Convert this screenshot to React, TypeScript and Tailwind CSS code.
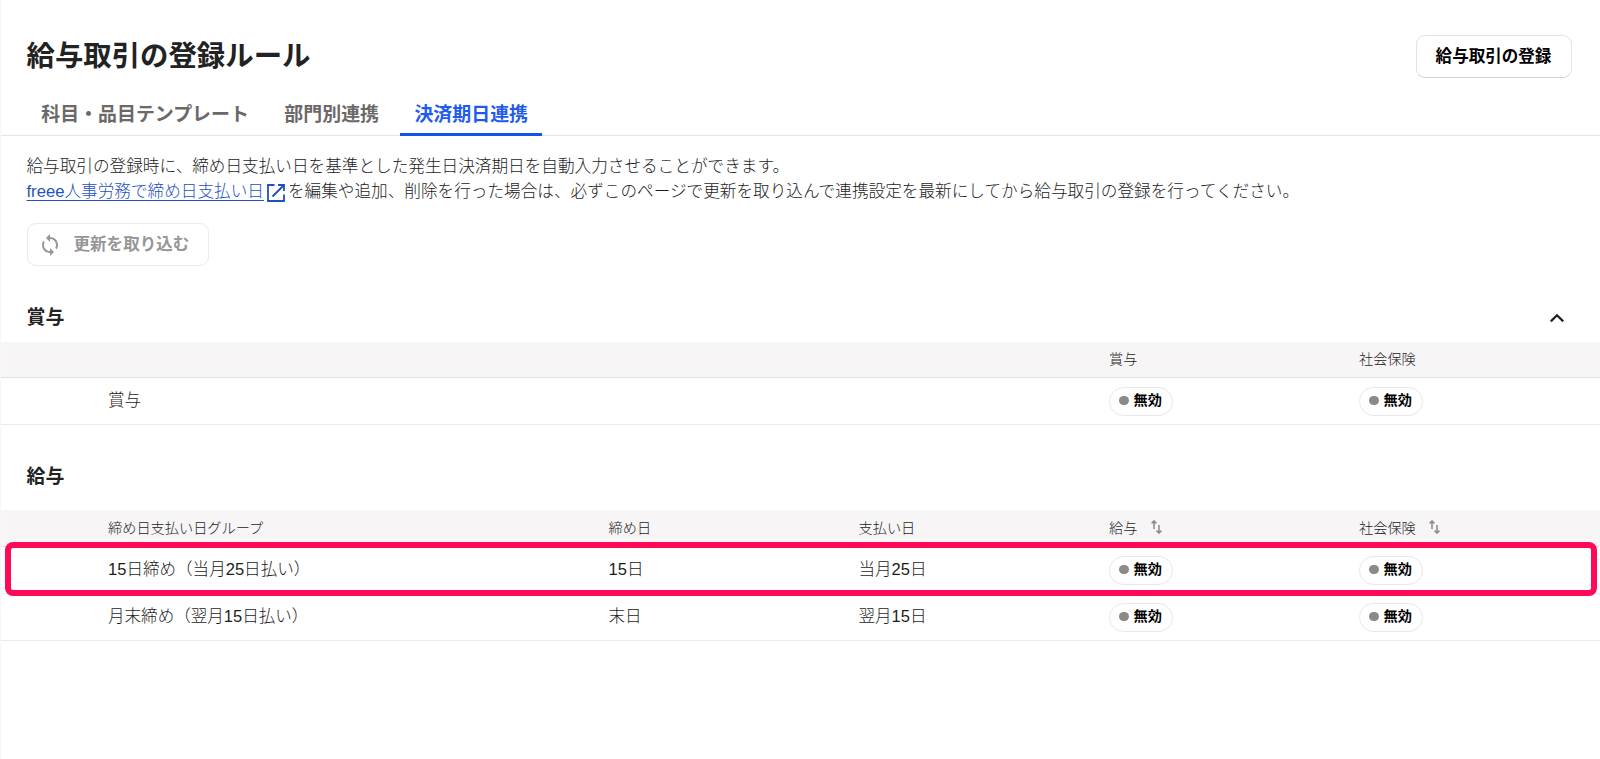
import React from 'react';

type SalaryRow = {
  group: string;
  closing: string;
  payment: string;
};

const tabs = ['科目・品目テンプレート', '部門別連携', '決済期日連携'];

const salaryRows: SalaryRow[] = [
  { group: '15日締め（当月25日払い）', closing: '15日', payment: '当月25日' },
  { group: '月末締め（翌月15日払い）', closing: '末日', payment: '翌月15日' },
];

// Both tables share the same columns
const rowGrid = 'grid grid-cols-[108px_500.5px_250px_250.5px_250px_1fr] items-center border-b';
const headRow = `${rowGrid} bg-[#f7f5f6] border-[#e1e0e1] pb-px text-[14.2px] leading-5 font-light text-[#1c1c1c]`;
const bodyRow = `${rowGrid} border-[#ebeaeb] pb-px text-[16.56px] leading-6 font-light text-[#1c1c1c]`;

const StatusBadge = () => (
  <span className="mt-0.5 flex h-[29px] w-16 items-center gap-[5px] rounded-full border border-[#e9e7e7] bg-white pl-[9px] pb-[2px] text-[14.2px] leading-5 font-bold text-black">
    <span className="h-[9.5px] w-[9.5px] rounded-full bg-[#8c8989]" />
    <span className="-mt-px">無効</span>
  </span>
);

const SortIcon = () => (
  <svg className="mb-[2px] h-[14px] w-[11px]" viewBox="0 0 11 14" fill="none" stroke="#8c8989" strokeWidth="1.5">
    <path d="M3 9V1M0.6 3.4L3 1L5.4 3.4" />
    <path d="M8 5V13M5.6 10.6L8 13L10.4 10.6" />
  </svg>
);

const App = () => {
  return (
    <div className="relative h-[759px] w-full overflow-hidden border-l border-[#f7f7f7] bg-white font-['Liberation_Sans','Noto_Sans_CJK_JP',sans-serif] text-[#323232]">
      <div className="-ml-px">
        <header className="flex h-[98px] items-start justify-between pr-[28.5px] pl-[26.5px]">
          <h1 className="pt-[36px] text-[28.4px] leading-10 font-bold text-[#222]">給与取引の登録ルール</h1>
          <button className="mt-[35px] h-[43px] w-[156px] rounded-[9px] border border-[#e3e1e1] border-b-[#d2d0d0] bg-white text-[16.56px] leading-6 font-bold text-black">
            給与取引の登録
          </button>
        </header>

        <nav className="flex h-[38px] gap-[7px] border-b border-[#e5e4e4] pl-[27px]">
          {tabs.map((tab) => (
            <button
              key={tab}
              className={
                tab === '決済期日連携'
                  ? 'h-[38px] border-b-3 border-[#0f55eb] px-[14.2px] pb-px text-[18.96px] leading-6 font-bold text-[#1f5bee]'
                  : 'h-[38px] border-b-3 border-transparent px-[14.2px] pb-px text-[18.96px] leading-6 font-bold text-[#6b6868]'
              }
            >
              {tab}
            </button>
          ))}
        </nav>

        <section className="pt-[18px] pl-[26.5px]">
          <p className="h-[25px] text-[16.64px] leading-[25px] font-light text-[#1c1c1c]">
            給与取引の登録時に、締め日支払い日を基準とした発生日決済期日を自動入力させることができます。
          </p>
          <div className="flex h-[25px] text-[16.64px] leading-[25px] font-light whitespace-nowrap text-[#1c1c1c]">
            <a href="#" className="flex text-[#2450c4]">
              <span className="underline underline-offset-3">freee人事労務で締め日支払い日</span>
              <svg className="mt-1 ml-[2px] h-5 w-5" viewBox="0 0 20 20" fill="none" stroke="#1f4fc4" strokeWidth="1.8">
                <path d="M8.5 2H2V18H18V11.5M12 2H18V8M18 2L6.5 13.5" />
              </svg>
            </a>
            <span className="ml-[2px]">
              を編集や追加、削除を行った場合は、必ずこのページで更新を取り込んで連携設定を最新にしてから給与取引の登録を行ってください。
            </span>
          </div>
          <button
            disabled
            className="mt-[19px] flex h-[43px] w-[182px] items-center rounded-[9px] border border-[#ebe9e9] bg-white pl-[10px] text-[16.56px] leading-6 font-bold text-[#989696]"
          >
            <svg className="h-6 w-6" viewBox="0 0 24 24" fill="#989696">
              <path d="M12 4V1L8 5l4 4V6c3.31 0 6 2.69 6 6 0 1.01-.25 1.97-.7 2.8l1.46 1.46C19.54 15.03 20 13.57 20 12c0-4.42-3.58-8-8-8zm0 14c-3.31 0-6-2.69-6-6 0-1.01.25-1.97.7-2.8L5.24 7.74C4.46 8.97 4 10.43 4 12c0 4.42 3.58 8 8 8v3l4-4-4-4v3z" />
            </svg>
            <span className="ml-3">更新を取り込む</span>
          </button>
        </section>

        <section>
          <div className="flex h-[76px] items-center justify-between pt-[26px] pr-[35px] pl-[26.5px]">
            <h2 className="pt-0.5 text-[18.9px] leading-7 font-bold text-[#222]">賞与</h2>
            <svg className="mt-px h-[10px] w-4" viewBox="0 0 16 10" fill="none" stroke="#222" strokeWidth="2.2">
              <path d="M1.8 8.4L8 2.2L14.2 8.4" />
            </svg>
          </div>
          <div className={`${headRow} h-9`}>
            <span className="col-start-5">賞与</span>
            <span>社会保険</span>
          </div>
          <div className={`${bodyRow} h-[47px]`}>
            <span className="col-start-2">賞与</span>
            <span className="col-start-5">
              <StatusBadge />
            </span>
            <StatusBadge />
          </div>
        </section>

        <section>
          <div className="flex h-[85px] items-center pt-[19px] pl-[26.5px]">
            <h2 className="text-[18.9px] leading-7 font-bold text-[#222]">給与</h2>
          </div>
          <div className={`${headRow} h-[37px]`}>
            <span className="col-start-2">締め日支払い日グループ</span>
            <span>締め日</span>
            <span>支払い日</span>
            <span className="flex items-center gap-[14px]">
              給与
              <SortIcon />
            </span>
            <span className="flex items-center gap-[13px]">
              社会保険
              <SortIcon />
            </span>
          </div>
          <div className="relative">
            {salaryRows.map((row) => (
              <div key={row.group} className={`${bodyRow} h-[47px]`}>
                <span className="col-start-2">{row.group}</span>
                <span>{row.closing}</span>
                <span>{row.payment}</span>
                <StatusBadge />
                <StatusBadge />
              </div>
            ))}
            {/* Highlighted row */}
            <div className="pointer-events-none absolute top-[-5px] right-[3px] left-[5px] h-[54px] rounded-lg border-[6px] border-[#ff0a56]" />
          </div>
        </section>
      </div>
    </div>
  );
};

export default App;
